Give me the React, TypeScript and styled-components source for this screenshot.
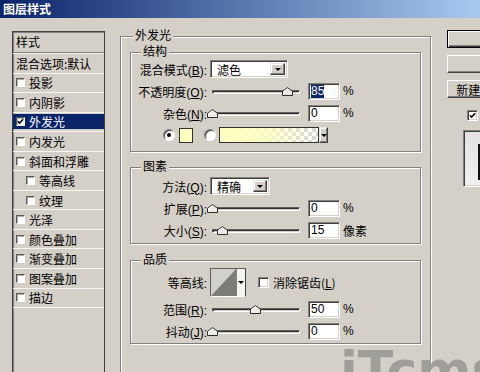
import React from "react";
import styled, { createGlobalStyle, css } from "styled-components";

const GlobalStyle = createGlobalStyle`
  html, body { margin: 0; padding: 0; background: #d4d0c8; overflow: hidden; }
  body {
    font-family: "Liberation Sans", "Noto Sans CJK SC", sans-serif;
    font-size: 12px;
    color: #000;
  }
  * { box-sizing: border-box; }
`;

const Window = styled.div`
  position: relative;
  width: 480px;
  height: 372px;
  overflow: hidden;
  background: #d4d0c8;
  display: flex;
  flex-direction: column;
`;

const TitleBar = styled.div`
  flex: none;
  height: 18px;
  padding-left: 3px;
  background: linear-gradient(to right, #0a246a, #a6caf0);
  color: #fff;
  font-family: "Noto Sans CJK SC", sans-serif;
  font-weight: bold;
  font-size: 12px;
  line-height: 18px;
`;

const Body = styled.div`
  flex: 1;
  min-height: 0;
  display: flex;
  align-items: flex-start;
  overflow: hidden;
`;

/* ---------- left style list ---------- */
const StyleList = styled.div`
  flex: none;
  width: 93px;
  height: 380px;
  margin: 13px 0 0 12px;
  border: 1px solid #404040;
  border-bottom: none;
  box-shadow: inset 1px 1px 0 #808080;
  font-family: "Noto Sans CJK SC", sans-serif;
`;

const ListHeader = styled.div`
  height: 21px;
  line-height: 20px;
  padding-left: 3px;
  border-bottom: 1px solid #808080;
`;

const ListRow = styled.div<{ $last?: boolean }>`
  height: 19.56px;
  display: flex;
  align-items: center;
  border-top: 1px solid #f6f5f1;
  ${(p) => p.$last && css`border-bottom: 1px solid #f6f5f1; height: 20.56px;`}
`;

const RowInner = styled.div<{ $indent?: boolean; $selected?: boolean }>`
  flex: 1;
  height: 15px;
  display: flex;
  align-items: center;
  gap: 4px;
  padding-left: ${(p) => (p.$indent ? 13 : 3)}px;
  background: ${(p) => (p.$selected ? "#0a246a" : "transparent")};
  color: ${(p) => (p.$selected ? "#fff" : "#000")};
  line-height: 15px;
  white-space: nowrap;
`;

const MiniCheck = styled.span`
  flex: none;
  width: 9px;
  height: 9px;
  background: #fff;
  border: 1px solid;
  border-color: #5a5a5a #fff #fff #5a5a5a;
  box-shadow: inset 1px 1px 0 #b0aea8;
  display: flex;
  align-items: center;
  justify-content: center;
`;

/* ---------- group boxes ---------- */
const OuterGroup = styled.fieldset`
  flex: none;
  width: 311px;
  height: 380px;
  margin: 12px 0 0 15px;
  padding: 4px 9px 0 9px;
  border: 1px solid #808080;
  box-shadow: inset 1px 1px 0 #fff, 1px 1px 0 #fff;
  min-inline-size: 0;
  font-family: "Liberation Sans", "Noto Sans CJK SC", sans-serif;
`;

const Legend = styled.legend<{ $inset: number }>`
  margin-left: ${(p) => p.$inset}px;
  padding: 0 2px;
  line-height: 12px;
  font-size: 12px;
  background: #d4d0c8;
`;

const Group = styled.fieldset<{ $mt: number; $pt: number; $pb: number }>`
  margin: ${(p) => p.$mt}px 0 0 0;
  padding: ${(p) => p.$pt}px 0 ${(p) => p.$pb}px 0;
  border: 1px solid #808080;
  box-shadow: inset 1px 1px 0 #fff, 1px 1px 0 #fff;
  min-inline-size: 0;
`;

const Row = styled.div<{ $h?: number; $indent?: number }>`
  height: ${(p) => p.$h ?? 22}px;
  display: flex;
  align-items: center;
  padding-left: ${(p) => p.$indent ?? 0}px;
  white-space: nowrap;
`;

const Label = styled.span`
  flex: none;
  width: 76px;
  margin-right: 3px;
  text-align: right;
`;

/* ---------- controls ---------- */
const sunken = css`
  border: 1px solid;
  border-color: #808080 #fff #fff #808080;
  box-shadow: inset 1px 1px 0 #404040, inset -1px -1px 0 #d4d0c8;
`;

const raised = css`
  border: 1px solid;
  border-color: #e8e6e0 #404040 #404040 #e8e6e0;
  box-shadow: inset -1px -1px 0 #808080, inset 1px 1px 0 #fff;
  background: #d4d0c8;
`;

const SelectBox = styled.div<{ $w: number }>`
  flex: none;
  width: ${(p) => p.$w}px;
  height: 18px;
  ${sunken}
  background: #fff;
  display: flex;
  align-items: stretch;
  padding: 2px 2px 2px 2px;
`;

const SelectText = styled.span`
  flex: 1;
  padding-left: 4px;
  line-height: 13px;
  font-family: "Noto Sans CJK SC", sans-serif;
`;

const ArrowButton = styled.span<{ $w: number }>`
  flex: none;
  width: ${(p) => p.$w}px;
  ${raised}
  display: flex;
  align-items: center;
  justify-content: center;
`;

const DownTri = styled.span`
  width: 0;
  height: 0;
  border-left: 3px solid transparent;
  border-right: 3px solid transparent;
  border-top: 3px solid #000;
`;

const SliderBox = styled.div`
  position: relative;
  flex: none;
  width: 92px;
  height: 22px;
`;

const SliderTrack = styled.div`
  position: absolute;
  left: 2px;
  right: 2px;
  top: 10px;
  height: 4px;
  border: 1px solid;
  border-color: #606060 #fff #fff #606060;
  box-shadow: inset 1px 1px 0 #303030;
  background: #d4d0c8;
`;

const ThumbSvg = styled.svg`
  position: absolute;
  top: 7px;
`;

const NumField = styled.div`
  flex: none;
  width: 32px;
  height: 17px;
  margin-left: 6px;
  ${sunken}
  background: #fff;
  padding-left: 2px;
  display: flex;
  align-items: center;
  font-family: "Liberation Sans", sans-serif;
  font-size: 12px;
`;

const SelectedText = styled.span`
  background: #0a246a;
  color: #fff;
  line-height: 13px;
`;

const Unit = styled.span`
  margin-left: 3px;
  font-family: "Liberation Sans", "Noto Sans CJK SC", sans-serif;
`;

const RadioDot = styled.span<{ $on?: boolean }>`
  flex: none;
  width: 12px;
  height: 12px;
  border-radius: 50%;
  background: #fff;
  border: 1px solid;
  border-color: #808080 #fff #fff #808080;
  box-shadow: inset 1px 1px 0 #404040;
  display: flex;
  align-items: center;
  justify-content: center;
  &::after {
    content: "";
    width: 4px;
    height: 4px;
    border-radius: 50%;
    background: ${(p) => (p.$on ? "#000" : "transparent")};
  }
`;

const Swatch = styled.span`
  flex: none;
  width: 14px;
  height: 15px;
  margin-left: 4px;
  border: 1px solid #303030;
  background: #ffffc0;
`;

const GradientPicker = styled.div`
  flex: none;
  display: flex;
  height: 16px;
  margin-left: 3px;
`;

const GradientStrip = styled.span`
  width: 100px;
  height: 16px;
  border: 1px solid #303030;
  background:
    linear-gradient(to right, #ffffc0 0%, rgba(255, 255, 192, 0.85) 45%, rgba(255, 255, 192, 0) 100%),
    conic-gradient(#d6d6d6 25%, #fff 0 50%, #d6d6d6 0 75%, #fff 0) 0 0 / 8px 8px;
`;

const GradientArrow = styled.span`
  width: 9px;
  height: 16px;
  ${raised}
  display: flex;
  align-items: center;
  justify-content: center;
`;

const ContourPicker = styled.div`
  flex: none;
  display: flex;
  height: 29px;
  width: 36px;
  border: 1px solid;
  border-color: #606060 #404040 #fff #606060;
`;

const ContourThumb = styled.span`
  width: 26px;
  border-right: 1px solid #808080;
  display: flex;
`;

const ContourArrow = styled.span`
  flex: 1;
  background: #f4f3f0;
  display: flex;
  align-items: center;
  justify-content: center;
`;

const CheckBox = styled.span<{ $size?: number }>`
  flex: none;
  width: ${(p) => p.$size ?? 11}px;
  height: ${(p) => p.$size ?? 11}px;
  background: #fff;
  ${sunken}
  display: flex;
  align-items: center;
  justify-content: center;
`;

const CheckLabel = styled.span`
  margin-left: 4px;
  font-family: "Noto Sans CJK SC", sans-serif;
`;

/* ---------- right column ---------- */
const SideColumn = styled.div`
  flex: none;
  width: 120px;
  margin: 12px 0 0 16px;
  display: flex;
  flex-direction: column;
  align-items: flex-start;
`;

const DialogButton = styled.div<{ $default?: boolean }>`
  width: 96px;
  height: 18px;
  margin-bottom: 7px;
  display: flex;
  align-items: center;
  justify-content: center;
  white-space: nowrap;
  font-family: "Liberation Sans", "Noto Sans CJK SC", sans-serif;
  font-size: 12px;
  background: #d4d0c8;
  border: 1px solid;
  border-color: #fff #404040 #404040 #fff;
  box-shadow: inset -1px -1px 0 #808080;
  ${(p) =>
    p.$default &&
    css`
      border-color: #000;
      box-shadow: inset 1px 1px 0 #fff, inset -1px -1px 0 #404040, inset -2px -2px 0 #808080;
    `}
`;

const PreviewToggle = styled.div`
  display: flex;
  align-items: center;
  margin: 2px 0 0 20px;
  font-family: "Noto Sans CJK SC", sans-serif;
  white-space: nowrap;
`;

const PreviewBox = styled.div`
  width: 72px;
  height: 57px;
  margin: 6px 0 0 16px;
  ${sunken}
  background: linear-gradient(to bottom, #e2e2e2, #f0f0f0);
  padding: 13px 0 0 14px;
`;

const PreviewSwatch = styled.div`
  width: 40px;
  height: 36px;
  background: #262626;
  border-left: 2px solid #111;
`;

const Watermark = styled.div`
  position: absolute;
  left: 340px;
  top: 344px;
  font-family: "DejaVu Sans", sans-serif;
  font-weight: bold;
  font-size: 52px;
  line-height: 52px;
  color: #a09e98;
  letter-spacing: 0;
  white-space: nowrap;
  pointer-events: none;
`;

/* ---------- pieces ---------- */
const Check = ({ size = 8, color = "#000" }: { size?: number; color?: string }) => (
  <svg width={size} height={size} viewBox="0 0 8 8">
    <path d="M1 3.8 L3 5.8 L7 1.5" fill="none" stroke={color} strokeWidth="1.7" />
  </svg>
);

const Slider = ({ value }: { value: number }) => (
  <SliderBox>
    <SliderTrack />
    <ThumbSvg width="11" height="9" viewBox="0 0 11 9" style={{ left: 2 + value * 88 - 5.5 }}>
      <path d="M0.5 8.5 V4.3 L5.5 0.6 L10.5 4.3 V8.5 Z" fill="#ecebe7" stroke="#2c2c2c" strokeWidth="1" />
      <path d="M1.5 7.5 V4.8 L5.5 1.9" fill="none" stroke="#fff" strokeWidth="1" />
    </ThumbSvg>
  </SliderBox>
);

const Key = ({ k }: { k: string }) => (
  <>
    (<u>{k}</u>):
  </>
);

type ListItem = { label: string; noCheck?: boolean; checked?: boolean; selected?: boolean; indent?: boolean };

const items: ListItem[] = [
  { label: "混合选项:默认", noCheck: true },
  { label: "投影" },
  { label: "内阴影" },
  { label: "外发光", checked: true, selected: true },
  { label: "内发光" },
  { label: "斜面和浮雕" },
  { label: "等高线", indent: true },
  { label: "纹理", indent: true },
  { label: "光泽" },
  { label: "颜色叠加" },
  { label: "渐变叠加" },
  { label: "图案叠加" },
  { label: "描边" },
];

export default function App() {
  return (
    <Window>
      <GlobalStyle />
      <TitleBar>图层样式</TitleBar>
      <Body>
        <StyleList>
          <ListHeader>样式</ListHeader>
          {items.map((it, i) => (
            <ListRow key={it.label} $last={i === items.length - 1}>
              <RowInner $indent={it.indent} $selected={it.selected}>
                {!it.noCheck && <MiniCheck>{it.checked && <Check size={7} />}</MiniCheck>}
                <span>{it.label}</span>
              </RowInner>
            </ListRow>
          ))}
        </StyleList>

        <OuterGroup>
          <Legend $inset={3}>外发光</Legend>

          <Group $mt={0} $pt={0} $pb={5}>
            <Legend $inset={10}>结构</Legend>
            <Row>
              <Label>
                混合模式<Key k="B" />
              </Label>
              <SelectBox $w={78}>
                <SelectText>滤色</SelectText>
                <ArrowButton $w={15}>
                  <DownTri />
                </ArrowButton>
              </SelectBox>
            </Row>
            <Row>
              <Label>
                不透明度<Key k="O" />
              </Label>
              <Slider value={0.86} />
              <NumField>
                <SelectedText>85</SelectedText>
              </NumField>
              <Unit>%</Unit>
            </Row>
            <Row>
              <Label>
                杂色<Key k="N" />
              </Label>
              <Slider value={0} />
              <NumField>0</NumField>
              <Unit>%</Unit>
            </Row>
            <Row $indent={32}>
              <RadioDot $on />
              <Swatch />
              <span style={{ width: 11 }} />
              <RadioDot />
              <GradientPicker>
                <GradientStrip />
                <GradientArrow>
                  <DownTri />
                </GradientArrow>
              </GradientPicker>
            </Row>
          </Group>

          <Group $mt={9} $pt={2} $pb={2}>
            <Legend $inset={10}>图素</Legend>
            <Row>
              <Label>
                方法<Key k="Q" />
              </Label>
              <SelectBox $w={60}>
                <SelectText>精确</SelectText>
                <ArrowButton $w={14}>
                  <DownTri />
                </ArrowButton>
              </SelectBox>
            </Row>
            <Row>
              <Label>
                扩展<Key k="P" />
              </Label>
              <Slider value={0} />
              <NumField>0</NumField>
              <Unit>%</Unit>
            </Row>
            <Row>
              <Label>
                大小<Key k="S" />
              </Label>
              <Slider value={0.12} />
              <NumField>15</NumField>
              <Unit>像素</Unit>
            </Row>
          </Group>

          <Group $mt={10} $pt={1} $pb={1}>
            <Legend $inset={10}>品质</Legend>
            <Row $h={31}>
              <Label>等高线:</Label>
              <ContourPicker>
                <ContourThumb>
                  <svg width="25" height="27" viewBox="0 0 25 27">
                    <rect x="0" y="0" width="25" height="27" fill="#d2d0cc" />
                    <polygon points="0,27 25,0 25,27" fill="#7c7b78" />
                  </svg>
                </ContourThumb>
                <ContourArrow>
                  <DownTri />
                </ContourArrow>
              </ContourPicker>
              <span style={{ width: 12 }} />
              <CheckBox />
              <CheckLabel>
                消除锯齿(<u>L</u>)
              </CheckLabel>
            </Row>
            <Row>
              <Label>
                范围<Key k="R" />
              </Label>
              <Slider value={0.49} />
              <NumField>50</NumField>
              <Unit>%</Unit>
            </Row>
            <Row>
              <Label>
                抖动<Key k="J" />
              </Label>
              <Slider value={0} />
              <NumField>0</NumField>
              <Unit>%</Unit>
            </Row>
          </Group>
        </OuterGroup>

        <SideColumn>
          <DialogButton $default>确定</DialogButton>
          <DialogButton>取消</DialogButton>
          <DialogButton>新建样式(W)...</DialogButton>
          <PreviewToggle>
            <CheckBox $size={11}>
              <Check size={7} />
            </CheckBox>
            <CheckLabel>预览(V)</CheckLabel>
          </PreviewToggle>
          <PreviewBox>
            <PreviewSwatch />
          </PreviewBox>
        </SideColumn>
      </Body>
      <Watermark>iTcms</Watermark>
    </Window>
  );
}
